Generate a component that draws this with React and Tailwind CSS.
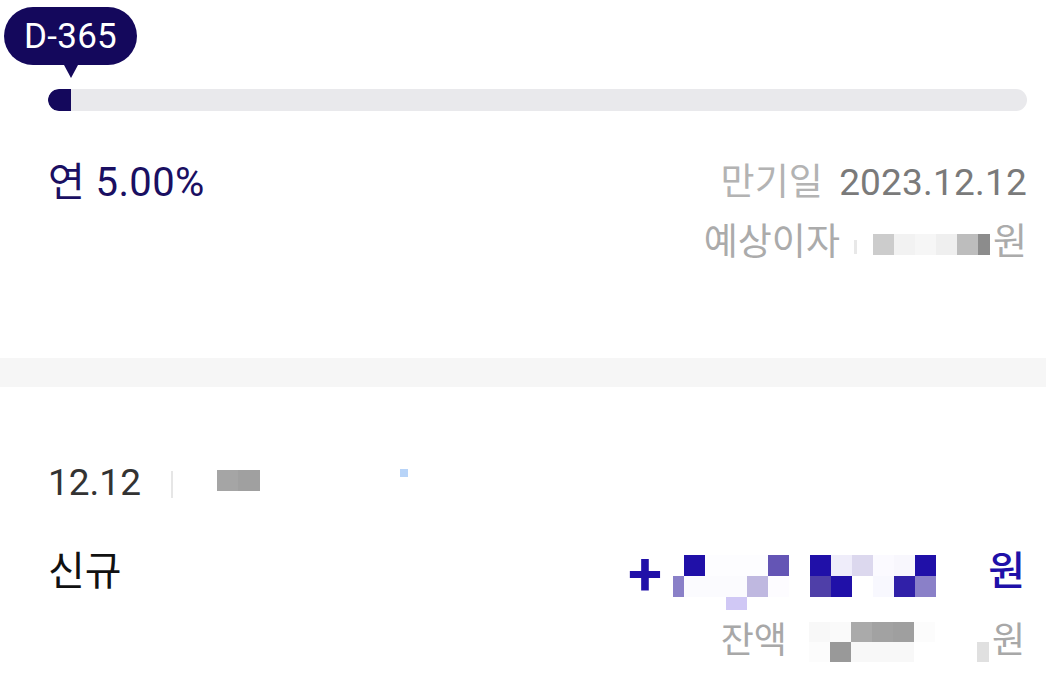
import React from "react";

const FONT = "font-['Roboto','Noto_Sans_CJK_KR',sans-serif]";

// Mosaic (pixelated / redacted) cells
const amountRows = [
  ["bg-white", "bg-[#2010a8]", "bg-[#fdfdff]", "bg-[#fdfdff]", "bg-[#fdfdff]", "bg-[#6455b5]", "bg-white", "bg-[#2010a8]", "bg-[#efedfa]", "bg-[#dcd8ee]", "bg-[#fbfaff]", "bg-[#f8f7fd]", "bg-[#2010a8]"],
  ["bg-[#8a80c8]", "bg-[#fbfbfe]", "bg-[#fbfbfe]", "bg-[#fbfbfe]", "bg-[#bfb8e0]", "bg-[#fdfcff]", "bg-white", "bg-[#4f3fa8]", "bg-[#2010a8]", "bg-white", "bg-[#f8f8fe]", "bg-[#3020a8]", "bg-[#8a80c8]"],
  ["bg-transparent", "bg-transparent", "bg-transparent", "bg-[#d0c8f5]", "bg-transparent", "bg-transparent", "bg-transparent", "bg-transparent", "bg-transparent", "bg-transparent", "bg-transparent", "bg-transparent", "bg-transparent"],
];

const balanceRows = [
  ["bg-[#f8f8f8]", "bg-[#fafafa]", "bg-[#aaaaaa]", "bg-[#a2a2a2]", "bg-[#9f9f9f]", "bg-[#fcfcfc]", "bg-white", "bg-white", "bg-white"],
  ["bg-[#fcfcfc]", "bg-[#999999]", "bg-[#f8f8f8]", "bg-[#f8f8f8]", "bg-[#f8f8f8]", "bg-white", "bg-white", "bg-white", "bg-[#e0e0e0]"],
];

const interestCells = ["bg-[#cccccc]", "bg-[#f2f2f2]", "bg-[#f6f6f6]", "bg-[#efefef]", "bg-[#bdbdbd]", "bg-[#8c8c8c]"];

export default function App() {
  return (
    <div className={`w-[1046px] h-[684px] bg-white overflow-hidden ${FONT}`}>
      {/* Top section */}
      <section className="pl-12 pr-[19px]">
        {/* Tooltip */}
        <div className="flex flex-col items-center w-[133px] -ml-[44px] pt-[7px]">
          <div className="h-[58px] w-[133px] rounded-full bg-[#14085c] flex items-center justify-center text-white text-[35px] leading-none tracking-[0.3px]">
            D-365
          </div>
          <div className="w-0 h-0 border-l-[7px] border-r-[7px] border-t-[13px] border-l-transparent border-r-transparent border-t-[#14085c]" />
        </div>
        {/* Progress bar */}
        <div className="mt-[11px] h-[22px] w-full rounded-full bg-[#e9e9ec] overflow-hidden flex">
          <div className="h-full w-[23px] bg-[#14085c] rounded-l-full" />
        </div>

        {/* Rate + maturity */}
        <div className="mt-12 flex justify-between items-start">
          <div className="text-[40px] leading-[48px] text-[#1a0f62] tracking-[0.4px]">연 5.00%</div>
          <div className="flex flex-col items-end gap-3">
            <div className="text-[37px] leading-[48px] flex items-center gap-[16px] tracking-[0.2px]">
              <span className="text-[#b3b3b3]">만기일</span>
              <span className="text-[#7a7a7a]">2023.12.12</span>
            </div>
            <div className="h-[48px] text-[37px] leading-[48px] flex items-center text-[#ababab]">
              <span>예상이자</span>
              <span className="ml-[14px] w-[3px] h-[14px] bg-[#e8e8e8] mt-[8px]" />
              <div className="ml-[16px] mt-[3px] flex">
                {interestCells.map((c, i) => (
                  <div key={i} className={`${c} h-[21px] ${i === 5 ? "w-[12px]" : "w-[21px]"}`} />
                ))}
              </div>
              <span className="ml-[3px]">원</span>
            </div>
          </div>
        </div>
      </section>

      {/* Divider band */}
      <div className="mt-[91px] h-[29px] bg-[#f6f6f6]" />

      {/* Transaction */}
      <section className="pl-12 pr-[21px] pt-[72px]">
        <div className="h-[48px] flex items-center text-[37px] leading-[48px] text-[#333333]">
          <span>12.12</span>
          <span className="ml-[30px] w-[2px] h-[27px] bg-[#e6e6e6] mt-[2px]" />
          <div className="ml-[44px] mt-[-6px] flex">
            <div className="w-[21px] h-[21px] bg-[#a5a5a5]" />
            <div className="w-[22px] h-[21px] bg-[#a0a0a0]" />
          </div>
          <div className="ml-[140px] mt-[-20px] w-[8px] h-[8px] bg-[#b8d4f8]" />
        </div>

        <div className="mt-[41px] h-[48px] flex items-start justify-between">
          <span className="text-[40px] leading-[48px] text-[#111111]">신규</span>
          <div className="flex items-start text-[#2010a8]">
            <span className="text-[62px] leading-[52px] font-semibold">+</span>
            <div className="ml-[11px] mt-[7px] grid grid-cols-[11px_repeat(12,21px)] grid-rows-[21px_21px_13px]">
              {amountRows.flat().map((c, i) => (
                <div key={i} className={c} />
              ))}
            </div>
            <span className="ml-[52px] text-[40px] leading-[48px] font-medium">원</span>
          </div>
        </div>

        <div className="mt-[21px] h-[48px] flex items-center justify-end text-[36px] leading-[48px] text-[#a8a8a8]">
          <span>잔액</span>
          <div className="ml-[22px] mt-[2px] grid grid-cols-[21px_21px_21px_21px_21px_21px_21px_21px_12px] grid-rows-[20px_20px]">
            {balanceRows.flat().map((c, i) => (
              <div key={i} className={c} />
            ))}
          </div>
          <span className="ml-[3px]">원</span>
        </div>
      </section>
    </div>
  );
}
